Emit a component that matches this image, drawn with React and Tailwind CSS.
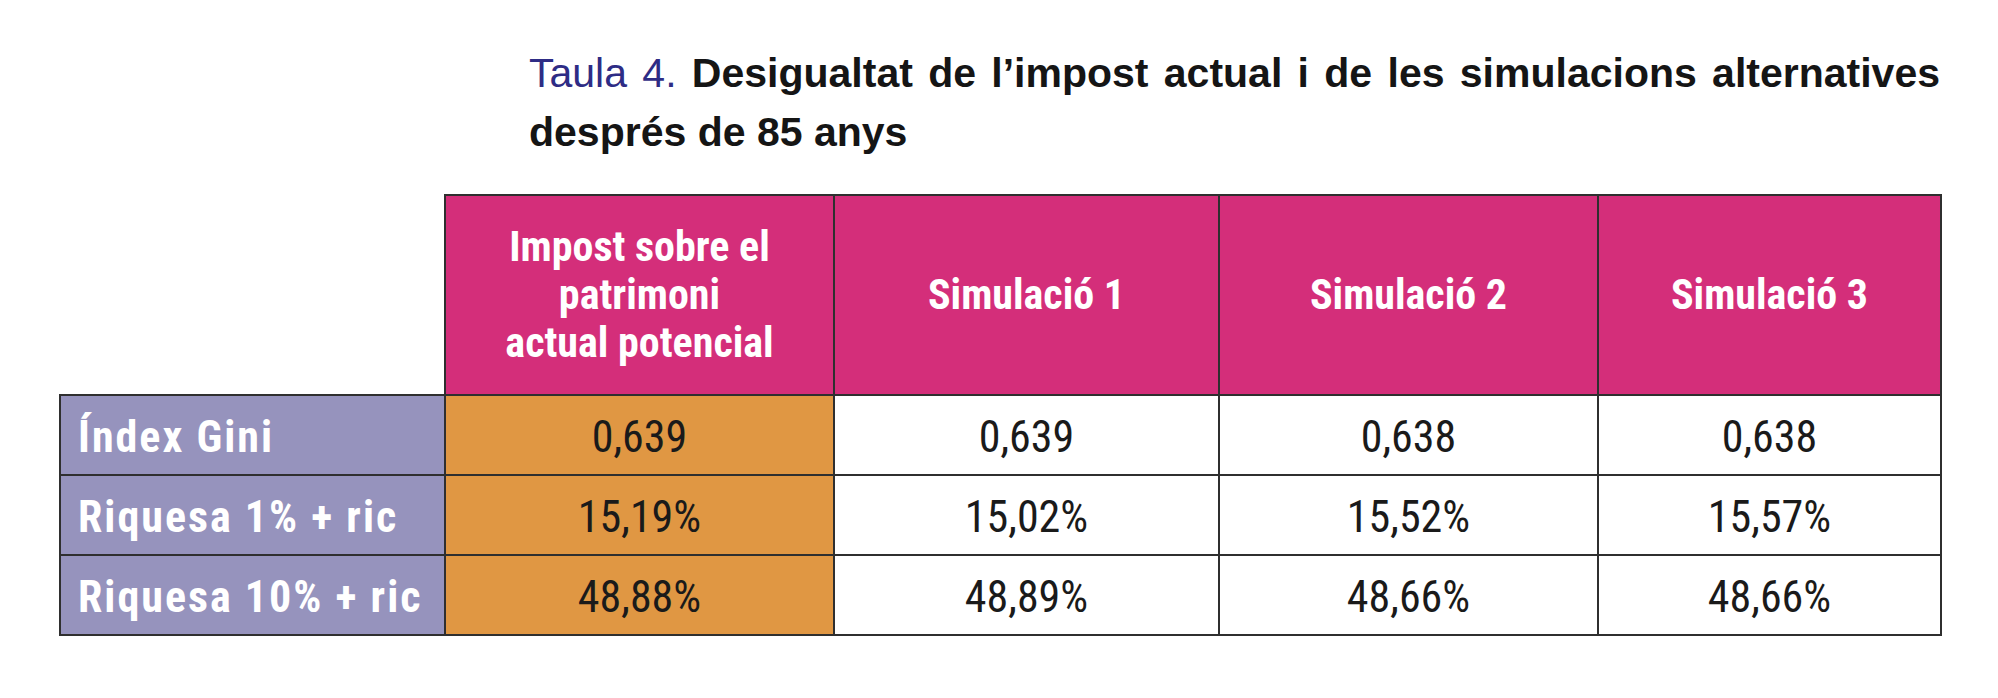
const columns = ['Simulació 1', 'Simulació 2', 'Simulació 3'];

const rows = [
  { label: 'Índex Gini', values: ['0,639', '0,639', '0,638', '0,638'] },
  { label: 'Riquesa 1% + ric', values: ['15,19%', '15,02%', '15,52%', '15,57%'] },
  { label: 'Riquesa 10% + ric', values: ['48,88%', '48,89%', '48,66%', '48,66%'] },
];

export default function App() {
  return (
    <div className="min-h-[698px] w-[1998px] bg-white pt-[44px]">
      <h2 className='ml-[529px] w-[1411px] font-["Liberation_Sans",Arial,sans-serif] text-[41px] leading-[59px] font-bold text-[#151515]'>
        <span className="block text-justify [text-align-last:justify]">
          <span className="font-normal text-[#2e2c85]">Taula 4.</span> Desigualtat de l’impost actual i de les
          simulacions alternatives
        </span>
        <span className="block">després de 85 anys</span>
      </h2>

      <table className='mt-[32px] ml-[59px] w-[1881px] table-fixed border-collapse font-["Roboto",sans-serif] font-stretch-condensed'>
        <colgroup>
          <col className="w-[385px]" />
          <col className="w-[389px]" />
          <col className="w-[385px]" />
          <col className="w-[379px]" />
          <col className="w-[343px]" />
        </colgroup>
        <thead>
          <tr className="h-[200px]">
            <th className="border-0 bg-white" />
            <th className="border-2 border-[#2f2f2f] bg-[#d42e7a] text-center text-[42px] leading-[48px] font-bold text-white">
              Impost sobre el
              <br />
              patrimoni
              <br />
              actual potencial
            </th>
            {columns.map((name) => (
              <th
                key={name}
                className="border-2 border-[#2f2f2f] bg-[#d42e7a] text-center text-[42px] leading-[48px] font-bold text-white"
              >
                {name}
              </th>
            ))}
          </tr>
        </thead>
        <tbody>
          {rows.map((row) => (
            <tr key={row.label} className="h-[80px]">
              <td className="border-2 border-[#2f2f2f] bg-[#9693bd] pt-1 pl-[17px] text-left text-[44px] leading-[48px] font-bold font-stretch-semi-condensed tracking-[2px] whitespace-nowrap text-white">
                {row.label}
              </td>
              {row.values.map((value, index) => (
                <td
                  key={index}
                  className={`border-2 border-[#2f2f2f] pt-1 text-center text-[44px] leading-[48px] font-normal text-[#1a1a1a] ${
                    index === 0 ? 'bg-[#e09743]' : 'bg-white'
                  }`}
                >
                  {value}
                </td>
              ))}
            </tr>
          ))}
        </tbody>
      </table>
    </div>
  );
}
